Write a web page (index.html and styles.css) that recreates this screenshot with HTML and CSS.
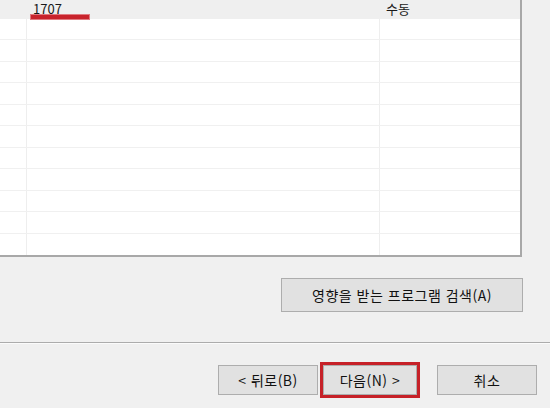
FILE: index.html
```html
<!DOCTYPE html>
<html lang="ko">
<head>
    <meta charset="UTF-8">
    <meta name="viewport" content="width=device-width, initial-scale=1.0">
    <title>프로그램 호환성 마법사</title>
    <link rel="stylesheet" href="styles.css">
</head>
<body>
    <div class="dialog">
        <div class="list">
            <div class="row selected">
                <div class="cell first"></div>
                <div class="cell">1707</div>
                <div class="cell">수동</div>
            </div>
            <div class="row"><div class="cell first"></div><div class="cell"></div><div class="cell"></div></div>
            <div class="row"><div class="cell first"></div><div class="cell"></div><div class="cell"></div></div>
            <div class="row"><div class="cell first"></div><div class="cell"></div><div class="cell"></div></div>
            <div class="row"><div class="cell first"></div><div class="cell"></div><div class="cell"></div></div>
            <div class="row"><div class="cell first"></div><div class="cell"></div><div class="cell"></div></div>
            <div class="row"><div class="cell first"></div><div class="cell"></div><div class="cell"></div></div>
            <div class="row"><div class="cell first"></div><div class="cell"></div><div class="cell"></div></div>
            <div class="row"><div class="cell first"></div><div class="cell"></div><div class="cell"></div></div>
            <div class="row"><div class="cell first"></div><div class="cell"></div><div class="cell"></div></div>
            <div class="row"><div class="cell first"></div><div class="cell"></div><div class="cell"></div></div>
            <div class="row last"><div class="cell first"></div><div class="cell"></div><div class="cell"></div></div>
            <span class="mark"></span>
        </div>

        <div class="search-bar">
            <button class="btn search-btn">영향을 받는 프로그램 검색(A)</button>
        </div>

        <div class="footer">
            <button class="btn">&lt; 뒤로(B)</button>
            <button class="btn next-btn">다음(N) &gt;</button>
            <button class="btn cancel-btn">취소</button>
        </div>
    </div>
</body>
</html>
```

FILE: styles.css
```css
body {
    margin: 0;
    padding: 0;
    background: #f0f0f0;
    font-family: 'Noto Sans CJK KR', 'Noto Sans', sans-serif;
    font-size: 13px;
    color: #000;
}

.dialog {
    width: 550px;
    height: 408px;
    display: flex;
    flex-direction: column;
    overflow: hidden;
}

.list {
    position: relative;
    width: 520px;
    height: 255px;
    background: #fff;
    border-right: 2px solid #a8a8a8;
    border-bottom: 2px solid #a8a8a8;
    display: grid;
    grid-template-rows: 19px repeat(11, 1fr);
}

.row {
    display: grid;
    grid-template-columns: 26px 353px 1fr;
    border-bottom: 1px solid #f0f0f0;
}

.row.last {
    border-bottom: none;
}

.row.selected {
    background: #efefef;
    border-bottom: none;
}

.cell {
    border-left: 1px solid #eeeeee;
    padding-left: 7px;
    line-height: 17px;
    color: #1a1a1a;
}

.cell.first {
    border-left: none;
    padding-left: 0;
}

.row.selected .cell {
    border-left: none;
}

.mark {
    position: absolute;
    left: 30px;
    top: 14px;
    width: 58px;
    height: 4px;
    background: #c8232c;
    border: 1px solid #e07a80;
}

.search-bar {
    display: flex;
    justify-content: flex-end;
    padding: 21px 27px 0 0;
    height: 64px;
    border-bottom: 1px solid #acacac;
    box-shadow: 0 1px 0 #fbfbfb;
}

.btn {
    font-family: 'Noto Sans CJK KR', 'Noto Sans', sans-serif;
    font-size: 14px;
    letter-spacing: 0.5px;
    color: #111;
    background: #e1e1e1;
    border: 1px solid #adadad;
    padding: 0;
    cursor: pointer;
}

.search-btn {
    width: 242px;
    height: 34px;
}

.footer {
    display: flex;
    justify-content: flex-end;
    padding: 22px 13px 0 0;
}

.footer .btn {
    width: 100px;
    height: 30px;
}

.footer .next-btn {
    width: 94px;
    margin-left: 5px;
    outline: 3px solid #c62128;
}

.footer .cancel-btn {
    margin-left: 20px;
}
```
